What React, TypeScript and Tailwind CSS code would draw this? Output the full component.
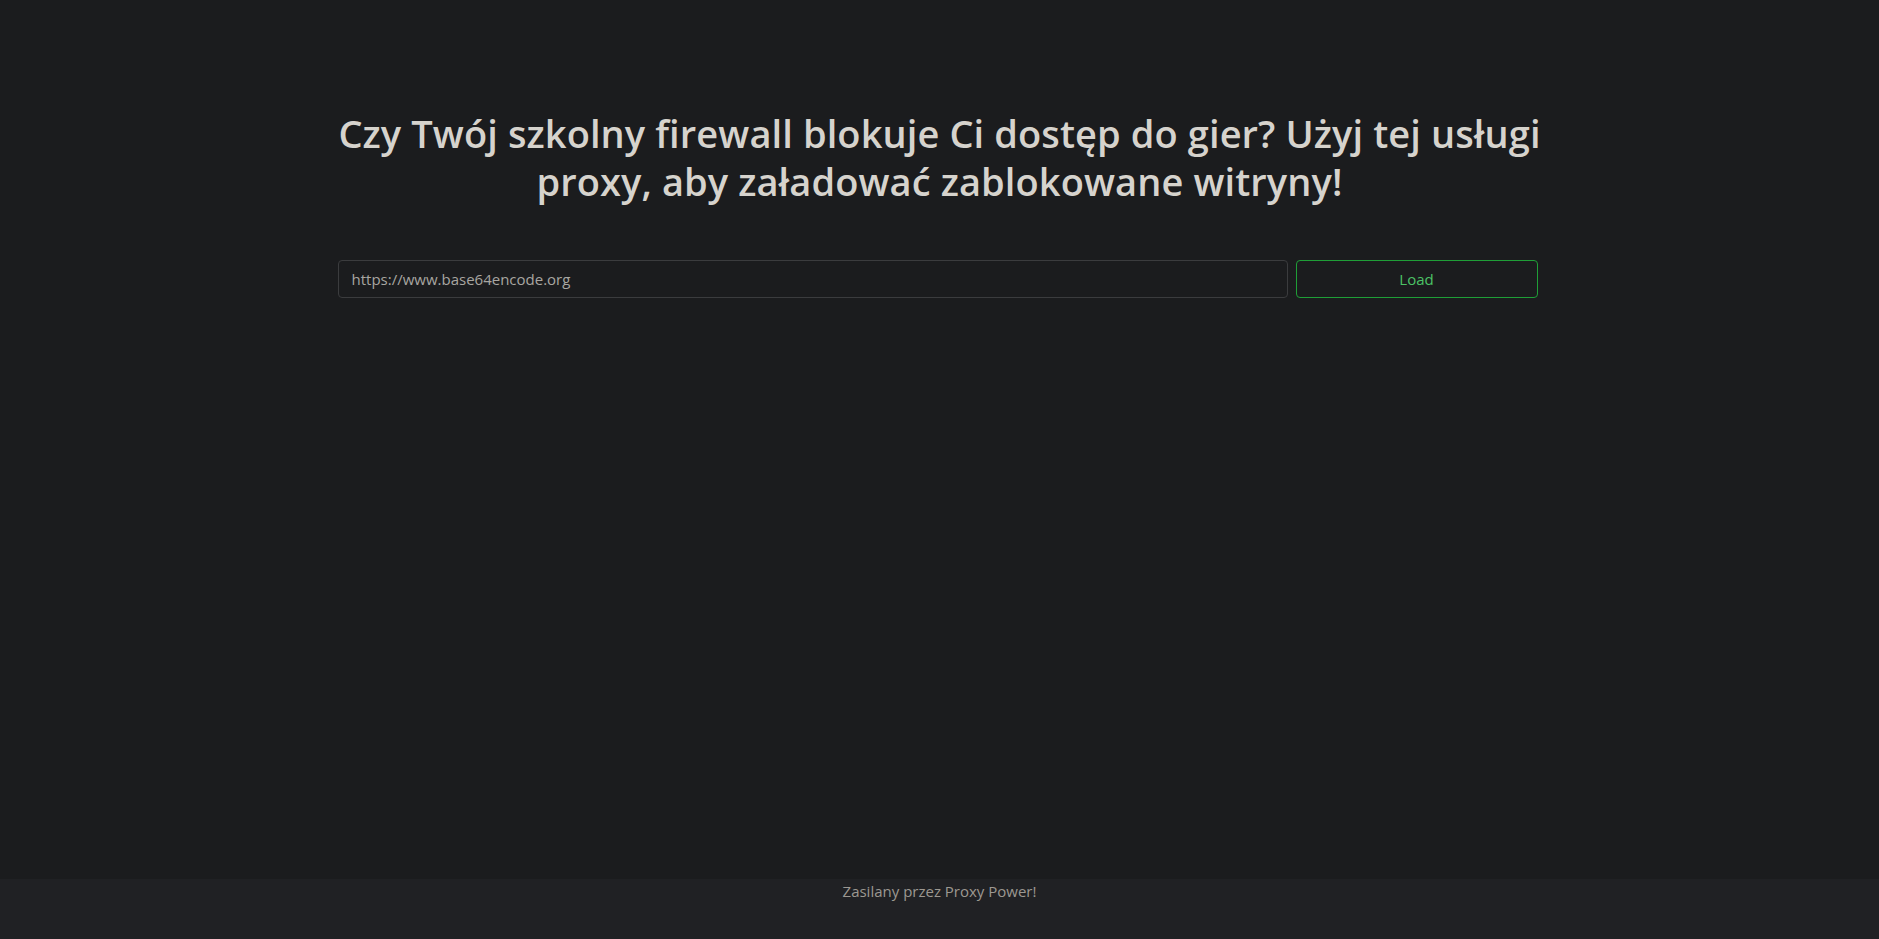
export default function App() {
  return (
    <div className="min-h-screen flex flex-col bg-[#1b1c1e] font-['Open_Sans',sans-serif]">
      <main className="flex-1 w-full max-w-[1204px] mx-auto pt-[109px]">
        <h1 className="-mx-4 text-center text-[38px] leading-[48px] font-semibold tracking-[0.1px] text-[#d6d3cd]">
          Czy Twój szkolny firewall blokuje Ci dostęp do gier? Użyj tej usługi proxy, aby załadować zablokowane witryny!
        </h1>

        <div className="flex gap-2 mt-[55px] pr-1">
          <input
            type="text"
            defaultValue="https://www.base64encode.org"
            className="flex-1 h-[38px] px-[13px] bg-[#1b1c1e] border border-[#3b3c3e] rounded text-[15px] text-[#a8a6a1] outline-none"
          />
          <button className="w-[242px] h-[38px] border border-[#1f9e37] rounded text-[15px] text-[#4cc266]">
            Load
          </button>
        </div>
      </main>

      <footer className="h-[60px] bg-[#202124] text-center">
        <span className="text-[15px] text-[#9c9891]">Zasilany przez Proxy Power!</span>
      </footer>
    </div>
  );
}
